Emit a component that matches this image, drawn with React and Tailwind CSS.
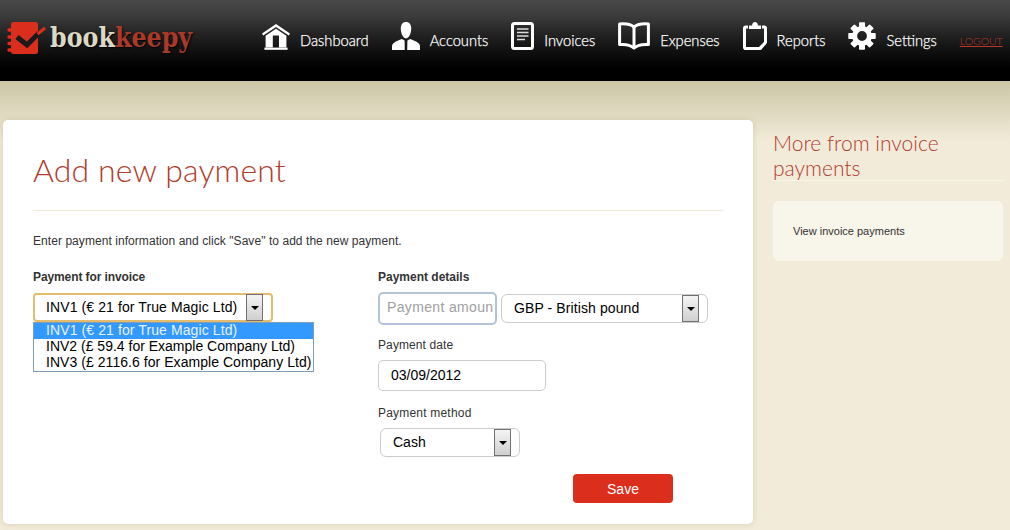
const lato = "font-['Lato','Open_Sans',sans-serif]"

function HomeIcon() {
    return (
        <svg width="28" height="26" viewBox="0 0 28 26" fill="white">
            <path d="M14 0 L28 9.6 L26.8 11.4 L14 3 L1.2 11.4 L0 9.6 Z" />
            <path fillRule="evenodd" d="M14 4.8 L24.4 11.8 V23.6 H3.6 V11.8 Z M10.8 11.6 V23.6 H17 V11.6 Z" />
            <rect x="2.4" y="23.6" width="23.2" height="2.2" />
        </svg>
    )
}

function PersonIcon() {
    return (
        <svg width="28" height="28" viewBox="0 0 28 28" fill="white">
            <path d="M14 0 C17.4 0 19.2 2.6 19.2 6.6 C19.2 11.4 17 16.4 14 16.4 C11 16.4 8.8 11.4 8.8 6.6 C8.8 2.6 10.6 0 14 0 Z" />
            <path d="M9.8 17 L12.6 18.6 L12.8 28 H0 V24.4 C0 21.4 2.4 20 9.8 17 Z" />
            <path d="M18.2 17 L15.4 18.6 L15.2 28 H28 V24.4 C28 21.4 25.6 20 18.2 17 Z" />
        </svg>
    )
}

function InvoiceIcon() {
    return (
        <svg width="23" height="28" viewBox="0 0 23 28">
            <rect x="1.5" y="1.5" width="20" height="25" rx="2" fill="none" stroke="white" strokeWidth="3" />
            <path d="M6 7 H17.5 M6 10.5 H17.5 M6 14 H17.5 M6 17.5 H14" stroke="#ddd" strokeWidth="1.5" />
        </svg>
    )
}

function BookIcon() {
    return (
        <svg width="32" height="28" viewBox="0 0 32 28" fill="none" stroke="white" strokeWidth="3" strokeLinejoin="round">
            <path d="M16 5 C12.5 2.2 7 1.5 1.6 2 V22.6 C7 22 12 22.8 16 26 C20 22.8 25 22 30.4 22.6 V2 C25 1.5 19.5 2.2 16 5 Z" />
            <path d="M16 5 V24" />
        </svg>
    )
}

function ReportsIcon() {
    return (
        <svg width="24" height="28" viewBox="0 0 24 28">
            <path d="M5 5 H2.8 C2 5 1.5 5.5 1.5 6.3 V25.2 C1.5 26 2 26.5 2.8 26.5 H16.5 L22.5 20.5 V6.3 C22.5 5.5 22 5 21.2 5 H19" fill="none" stroke="white" strokeWidth="3" />
            <path d="M6 3.4 H9 C9.4 1 10.6 0 12 0 C13.4 0 14.6 1 15 3.4 H18 V7 H6 Z" fill="white" />
            <path d="M16 27 L23 20 V22 L18 28 Z" fill="white" />
        </svg>
    )
}

function GearIcon() {
    const teeth = [0, 45, 90, 135, 180, 225, 270, 315]
    return (
        <svg width="28" height="28" viewBox="0 0 28 28">
            {teeth.map((a) => (
                <rect key={a} x="11" y="0.3" width="6" height="6" rx="0.8" fill="white" transform={`rotate(${a} 14 14)`} />
            ))}
            <circle cx="14" cy="14" r="7.4" fill="none" stroke="white" strokeWidth="5" />
        </svg>
    )
}

function LogoIcon() {
    return (
        <svg width="39" height="32" viewBox="0 0 39 32" className="shrink-0">
            <rect x="4" y="0" width="27" height="32" rx="2.5" fill="#dc2e1d" />
            <path d="M2 8 H6 M2 15 H6 M2 21.5 H6 M2 28 H6" stroke="#dc2e1d" strokeWidth="3.4" strokeLinecap="round" />
            <path d="M10 15 L20 23 L32 11" fill="none" stroke="#1a1a1a" strokeWidth="5" />
            <path d="M30.5 12 L38 6" stroke="#dc2e1d" strokeWidth="3" />
        </svg>
    )
}

function SelectArrow() {
    return (
        <span className="flex h-[27px] w-[17px] shrink-0 items-center justify-center border border-[#707070] bg-gradient-to-b from-[#f4f4f4] to-[#cfcfcf]">
            <span className="border-x-[4px] border-t-[4px] border-x-transparent border-t-black" />
        </span>
    )
}

function Select({ value, className }) {
    return (
        <div className={`flex items-center text-sm text-black ${className}`}>
            <span className="flex-1 whitespace-nowrap pb-[2px]">{value}</span>
            <SelectArrow />
        </div>
    )
}

const navItems = [
    { label: "Dashboard", icon: <HomeIcon /> },
    { label: "Accounts", icon: <PersonIcon /> },
    { label: "Invoices", icon: <InvoiceIcon /> },
    { label: "Expenses", icon: <BookIcon /> },
    { label: "Reports", icon: <ReportsIcon /> },
    { label: "Settings", icon: <GearIcon /> },
]

function Header() {
    return (
        <header className="flex h-[81px] items-start bg-[linear-gradient(to_bottom,#4a494a_0%,#3b3a3b_21%,#252425_41%,#111_62%,#000_84%,#000_100%)] pl-[7px] pr-[7px] pt-[22px]">
            <div className="flex w-[255px] shrink-0 items-center gap-[4px]">
                <LogoIcon />
                <span className="inline-block origin-left scale-x-[0.85] whitespace-nowrap font-['DejaVu_Serif',serif] text-[28px] font-bold leading-[32px] [text-shadow:1px_1px_2px_#000]">
                    <span className="text-[#dcd8c6]">book</span>
                    <span className="text-[#a93a2b]">keepy</span>
                </span>
            </div>
            <nav className={`flex flex-1 items-end gap-[23px] ${lato}`}>
                {navItems.map((item) => (
                    <a key={item.label} className="flex items-end gap-[10px] text-[14.7px] font-light text-white [-webkit-text-stroke:0.25px_white]">
                        {item.icon}
                        <span className="leading-[20px]">{item.label}</span>
                    </a>
                ))}
                <a className="text-[10.5px] font-light leading-[18px] text-[#b8392b] underline">LOGOUT</a>
            </nav>
        </header>
    )
}

function PaymentForm() {
    return (
        <main className="h-[404px] w-[750px] shrink-0 rounded-[5px] bg-white px-[30px] font-['Liberation_Sans',Arial,sans-serif] shadow-[0_0_6px_rgba(180,170,130,0.45)]">
            <h1 className={`border-b border-[#f2ebd9] pb-[20px] pt-[30px] text-[32px] font-light leading-[40px] tracking-[0.13px] text-[#b03b2e] ${lato}`}>
                Add new payment
            </h1>
            <p className="mt-[22px] text-xs leading-[16px] tracking-[0.06px] text-[#333]">
                Enter payment information and click "Save" to add the new payment.
            </p>
            <div className="mt-[20px] grid grid-cols-[345px_1fr]">
                <div>
                    <label className="block text-xs font-bold leading-[16px] tracking-[-0.1px] text-[#333]">Payment for invoice</label>
                    <div className="relative mt-[8px]">
                        <Select
                            value="INV1 (€ 21 for True Magic Ltd)"
                            className="h-[29px] w-[240px] rounded-[4px] border-2 border-[#e3bd6c] pl-[11px] pr-[8px] tracking-[0.1px]"
                        />
                        <ul className="absolute left-0 top-[29px] w-[281px] border border-[#7f9db9] bg-white text-sm leading-[14px] text-black">
                            <li className="h-[16px] bg-[#3399ff] pl-[12px] tracking-[0.1px] text-[#e8f2ff]">INV1 (€ 21 for True Magic Ltd)</li>
                            <li className="h-[16px] pl-[12px]">INV2 (£ 59.4 for Example Company Ltd)</li>
                            <li className="h-[16px] pl-[12px] tracking-[0.05px]">INV3 (£ 2116.6 for Example Company Ltd)</li>
                        </ul>
                    </div>
                </div>
                <div>
                    <label className="block text-xs font-bold leading-[16px] text-[#333]">Payment details</label>
                    <div className="mt-[7px] flex items-center gap-[4px]">
                        <input
                            placeholder="Payment amount"
                            className="h-[33px] w-[119px] rounded-[5px] border-2 border-[#b4c4d8] pb-[4px] pl-[7px] pr-[1px] text-sm tracking-[0.35px] outline-none placeholder:text-[#a0a0a0]"
                        />
                        <Select
                            value="GBP - British pound"
                            className="h-[29px] w-[207px] rounded-[6px] border border-[#ccc] pl-[12px] pr-[8px] tracking-[0.1px]"
                        />
                    </div>
                    <label className="mt-[12px] block text-xs leading-[16px] tracking-[0.1px] text-[#333]">Payment date</label>
                    <input
                        readOnly
                        value="03/09/2012"
                        className="mt-[7px] block h-[31px] w-[168px] rounded-[5px] border border-[#ccc] pb-[2px] pl-[12px] text-sm text-black outline-none"
                    />
                    <label className="mt-[14px] block text-xs leading-[16px] tracking-[0.2px] text-[#333]">Payment method</label>
                    <Select
                        value="Cash"
                        className="ml-[2px] mt-[7px] h-[29px] w-[140px] rounded-[6px] border border-[#ccc] pl-[12px] pr-[8px]"
                    />
                    <button className="ml-[195px] mt-[17px] block h-[29px] w-[100px] rounded-[4px] bg-[#dc2e1d] text-sm text-white">
                        Save
                    </button>
                </div>
            </div>
        </main>
    )
}

function Sidebar() {
    return (
        <aside className="ml-[20px] w-[230px] shrink-0 pt-[10px]">
            <h2 className={`border-b border-[#f9f6ec] text-[21px] font-light leading-[25px] text-[#b03b2e] ${lato}`}>
                More from invoice payments
            </h2>
            <div className="mt-[20px] flex h-[60px] items-center rounded-[6px] bg-[#f8f5ea] pl-[20px] font-['Liberation_Sans',Arial,sans-serif] text-[11px] text-[#333]">
                View invoice payments
            </div>
        </aside>
    )
}

export default function App() {
    return (
        <div className="h-[530px] overflow-hidden bg-[#f2ebd9]">
            <Header />
            <div className="h-[60px] bg-gradient-to-b from-[#cbc6a6] to-[#f2ebd9]">
                <div className="flex pl-[3px] pt-[39px]">
                    <PaymentForm />
                    <Sidebar />
                </div>
            </div>
        </div>
    )
}
